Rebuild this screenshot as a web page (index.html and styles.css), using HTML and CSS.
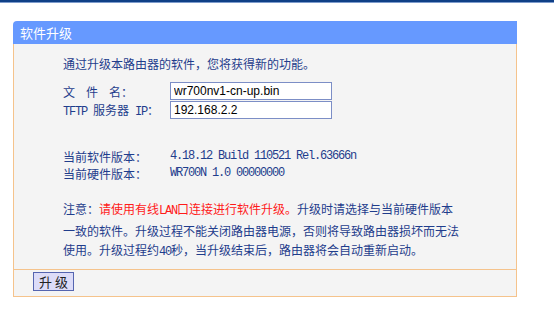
FILE: index.html
```html
<!DOCTYPE html>
<html lang="zh-CN">
<head>
    <meta charset="UTF-8">
    <meta name="viewport" content="width=device-width, initial-scale=1.0">
    <title>软件升级</title>
    <link rel="stylesheet" href="styles.css">
</head>
<body>
    <div class="topbar"></div>
    <div class="panel">
        <div class="panel-title">软件升级</div>
        <div class="panel-body">
            <p class="intro">通过升级本路由器的软件，您将获得新的功能。</p>
            <div class="form">
                <label for="file"><span class="wide">文件</span>名：</label>
                <input type="text" id="file" value="wr700nv1-cn-up.bin">
                <label for="tftp"><span class="half">TFTP&nbsp;</span>服务器<span class="half">&nbsp;IP</span>：</label>
                <input type="text" id="tftp" value="192.168.2.2">
            </div>
            <div class="versions">
                <span>当前软件版本：</span><span class="half">4.18.12 Build 110521 Rel.63666n</span>
                <span>当前硬件版本：</span><span class="half">WR700N 1.0 00000000</span>
            </div>
            <p class="notice">注意：<span class="warn">请使用有线<span class="half">LAN</span>口连接进行软件升级。</span>升级时请选择与当前硬件版本<br>一致的软件。升级过程不能关闭路由器电源，否则将导致路由器损坏而无法<br>使用。升级过程约<span class="half">40</span>秒，当升级结束后，路由器将会自动重新启动。</p>
        </div>
        <div class="panel-foot">
            <button type="button">升 级</button>
        </div>
    </div>
</body>
</html>
```

FILE: styles.css
```css
body {
    margin: 0;
    background: #ffffff;
    font-family: "Noto Sans CJK SC", "Liberation Sans", sans-serif;
    font-size: 12px;
    color: #1f3d8c;
}
.topbar {
    height: 2px;
    background: #0f3f86;
    border-bottom: 1px solid #7d9bcc;
}
.panel {
    margin: 18px 0 0 13px;
    width: 504px;
}
.panel-title {
    height: 23px;
    line-height: 23px;
    padding-left: 7px;
    background: #6699ff;
    color: #ffffff;
    font-size: 13px;
    border-top-left-radius: 4px;
}
.panel-body {
    background: #f4f4f4;
    border: 1px solid #f5c38c;
    border-top: none;
    padding: 11px 0 7px 49px;
}
.intro {
    margin: 0;
    line-height: 18px;
}
.form {
    display: grid;
    grid-template-columns: 107px 162px;
    row-gap: 1px;
    margin-top: 9px;
    align-items: center;
}
.form input {
    height: 18px;
    box-sizing: border-box;
    margin: 0;
    padding: 0 3px;
    border: 1px solid #7c8ec6;
    background: #ffffff;
    font-family: "Liberation Sans", Arial, sans-serif;
    font-size: 12px;
    color: #000000;
}
.wide {
    letter-spacing: 11px;
}
.half {
    font-family: "Liberation Mono", monospace;
    letter-spacing: -1.2px;
}
.versions {
    display: grid;
    grid-template-columns: 107px auto;
    line-height: 17px;
    margin-top: 29px;
}
.notice {
    margin: 17px 0 0;
    line-height: 19px;
    white-space: nowrap;
}
.warn {
    color: #ff1a1a;
}
.panel-foot {
    background: #f4f4f4;
    border: 1px solid #f5c38c;
    border-top: none;
    height: 26px;
    padding-left: 19px;
}
.panel-foot button {
    margin-top: 2px;
    height: 19px;
    width: 41px;
    padding: 0;
    background: #dcdcf8;
    border: 1px solid #5565b0;
    font-family: "Noto Sans CJK SC", sans-serif;
    font-size: 13px;
    line-height: 17px;
    color: #222222;
}
```
